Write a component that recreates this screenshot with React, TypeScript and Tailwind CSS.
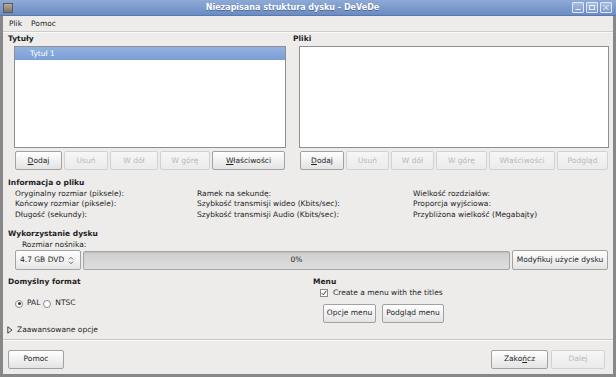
const btnBase =
  "h-[19px] shrink-0 flex items-center justify-center rounded-[2px] border bg-linear-to-b";
const btnOn = "border-[#a2a2a2] from-white to-[#e3e3e3] text-[#1e1e1e]";
const btnOff = "border-[#d2d2d2] from-[#f6f6f6] to-[#ebebeb] text-[#b9b9b9]";

function Btn({
  w,
  off,
  children,
  className = "",
}: {
  w: string;
  off?: boolean;
  children: React.ReactNode;
  className?: string;
}) {
  return (
    <div className={`${btnBase} ${off ? btnOff : btnOn} ${w} ${className}`}>
      {children}
    </div>
  );
}

function U({ children }: { children: React.ReactNode }) {
  return <span className="underline underline-offset-[1px]">{children}</span>;
}

function TitleBar() {
  return (
    <div className="relative h-[16px] shrink-0 flex items-center bg-linear-to-b from-[#8eaad6] to-[#6b8cc3] border-b border-[#5a78ab]">
      <div className="ml-[3px] w-[10px] h-[10px] bg-linear-to-b from-[#b3aba0] to-[#7c746b] border border-[#5f5a53]" />
      <div className="flex-1 text-center text-white font-bold text-[8px] [text-shadow:0_1px_0_#4a6796]">
        Niezapisana struktura dysku - DeVeDe
      </div>
      <div className="flex gap-[2px] mr-[4px]">
        {["min", "max", "close"].map((k) => (
          <div
            key={k}
            className="w-[12px] h-[11px] rounded-[1px] border border-[#dfe8f6] bg-linear-to-b from-[#a9bfe2] to-[#7d9acb] flex items-center justify-center"
          >
            <svg width="8" height="7" viewBox="0 0 8 7" fill="none" stroke="#eef3fb" strokeWidth="1">
              {k === "min" && <path d="M1.5 5.5h5" />}
              {k === "max" && <rect x="1.5" y="1.5" width="5" height="4" />}
              {k === "close" && <path d="M1.5 1l5 5M6.5 1l-5 5" />}
            </svg>
          </div>
        ))}
      </div>
    </div>
  );
}

function ListBox({ w, children }: { w: string; children?: React.ReactNode }) {
  return (
    <div className={`${w} h-[102px] bg-white border border-[#8f8f8f]`}>{children}</div>
  );
}

const INFO = [
  ["Oryginalny rozmiar (piksele):", "Ramek na sekundę:", "Wielkość rozdziałów:"],
  ["Końcowy rozmiar (piksele):", "Szybkość transmisji wideo (Kbits/sec):", "Proporcja wyjściowa:"],
  ["Długość (sekundy):", "Szybkość transmisji Audio (Kbits/sec):", "Przybliżona wielkość (Megabajty)"],
];

export default function App() {
  return (
    <div className="w-[616px] h-[377px] bg-[#878787] flex flex-col overflow-hidden font-['DejaVu_Sans',sans-serif] text-[7.5px] text-[#1e1e1e]">
      <TitleBar />
      <div className="flex-1 mx-[3px] mb-[3px] bg-[#edeceb] flex flex-col">
        {/* menubar */}
        <div className="h-[16px] shrink-0 flex items-center gap-[9px] pl-[6px] border-b border-[#cfcdca] shadow-[0_1px_0_#fafafa] text-[7.5px]">
          <span>Plik</span>
          <span>Pomoc</span>
        </div>

        {/* titles / files */}
        <div className="flex pl-[5px]">
          <div className="w-[278px] flex flex-col">
            <div className="h-[14px] leading-[14px] font-bold">Tytuły</div>
            <div className="pl-[6px]">
              <ListBox w="w-[272px]">
                <div className="h-[13px] leading-[13px] pl-[15px] text-white bg-linear-to-b from-[#92b2e0] to-[#7b9fd6]">
                  Tytuł 1
                </div>
              </ListBox>
              <div className="flex gap-[2px] mt-[3px] pl-[1px]">
                <Btn w="w-[47px]"><U>D</U>odaj</Btn>
                <Btn w="w-[44px]" off>Usuń</Btn>
                <Btn w="w-[48px]" off>W dół</Btn>
                <Btn w="w-[50px]" off>W górę</Btn>
                <Btn w="w-[73px]"><U>W</U>łaściwości</Btn>
              </div>
            </div>
          </div>
          <div className="ml-[7px] w-[316px] flex flex-col">
            <div className="h-[14px] leading-[14px] font-bold">Pliki</div>
            <div className="pl-[6px]">
              <ListBox w="w-[310px]" />
              <div className="flex gap-[2px] mt-[3px] pl-[1px]">
                <Btn w="w-[44px]"><U>D</U>odaj</Btn>
                <Btn w="w-[43px]" off>Usuń</Btn>
                <Btn w="w-[43px]" off>W dół</Btn>
                <Btn w="w-[51px]" off>W górę</Btn>
                <Btn w="w-[66px]" off>Właściwości</Btn>
                <Btn w="w-[51px]" off>Podgląd</Btn>
              </div>
            </div>
          </div>
        </div>

        {/* file info */}
        <div className="mt-[8px] pl-[5px] leading-[10.5px]">
          <div className="font-bold">Informacja o pliku</div>
          {INFO.map((r) => (
            <div key={r[0]} className="grid grid-cols-[182px_216px_1fr] pl-[7px]">
              <span>{r[0]}</span>
              <span>{r[1]}</span>
              <span>{r[2]}</span>
            </div>
          ))}
        </div>

        {/* disk usage */}
        <div className="mt-[9px] pl-[5px] leading-[10.5px]">
          <div className="font-bold">Wykorzystanie dysku</div>
          <div className="pl-[14px]">Rozmiar nośnika:</div>
        </div>
        <div className="flex items-center pl-[12px] pr-[5px] h-[20px]">
          <div className="w-[66px] h-[20px] flex items-center justify-between pl-[4px] pr-[6px] rounded-[2px] border border-[#a2a2a2] bg-linear-to-b from-white to-[#e6e6e6] whitespace-nowrap">
            <span>4.7 GB DVD</span>
            <svg width="6" height="9" viewBox="0 0 6 9" fill="none" stroke="#555" strokeWidth="0.9" className="shrink-0">
              <path d="M1 3.3L3 1.3 5 3.3M1 5.7L3 7.7 5 5.7" />
            </svg>
          </div>
          <div className="ml-[2px] w-[427px] h-[19px] flex items-center justify-center rounded-[2px] border border-[#a6a6a6] bg-linear-to-b from-[#cfcfcf] to-[#dedede] shadow-[inset_0_1px_1px_#bdbdbd]">
            0%
          </div>
          <Btn w="w-[96px]" className="ml-[2px] h-[20px]">Modyfikuj użycie dysku</Btn>
        </div>

        {/* format / menu */}
        <div className="flex mt-[7px] pl-[5px] leading-[10.5px]">
          <div className="w-[305px] flex flex-col">
            <div className="font-bold">Domyślny format</div>
            <div className="flex items-center h-[14px] mt-[9px] pl-[7px]">
              <span className="w-[8px] h-[8px] rounded-full border border-[#8a8a8a] bg-white flex items-center justify-center">
                <span className="w-[3px] h-[3px] rounded-full bg-[#333]" />
              </span>
              <span className="ml-[4px]">PAL</span>
              <span className="ml-[3px] w-[8px] h-[8px] rounded-full border border-[#8a8a8a] bg-white" />
              <span className="ml-[4px]">NTSC</span>
            </div>
          </div>
          <div className="flex flex-col">
            <div className="font-bold">Menu</div>
            <div className="flex items-center h-[11px] pl-[7px]">
              <span className="w-[8px] h-[8px] border border-[#8a8a8a] bg-white flex items-center justify-center">
                <svg width="6" height="6" viewBox="0 0 6 6" fill="none" stroke="#333" strokeWidth="1">
                  <path d="M0.8 3.2L2.3 4.8 5.3 0.8" />
                </svg>
              </span>
              <span className="ml-[5px]">Create a menu with the titles</span>
            </div>
            <div className="flex gap-[6px] mt-[5px] pl-[10px]">
              <Btn w="w-[53px]" className="h-[17px]">Opcje menu</Btn>
              <Btn w="w-[62px]" className="h-[17px]">Podgląd menu</Btn>
            </div>
          </div>
        </div>

        {/* advanced */}
        <div className="flex items-center h-[10px] mt-[2px] pl-[4px]">
          <svg width="6" height="8" viewBox="0 0 6 8" fill="none" stroke="#333" strokeWidth="0.9">
            <path d="M0.8 0.8L5 4 0.8 7.2Z" />
          </svg>
          <span className="ml-[4px]">Zaawansowane opcje</span>
        </div>

        <div className="mt-[4px] h-[2px] border-t border-[#c9c7c4] bg-[#fbfbfa]" />

        {/* dialog buttons */}
        <div className="flex items-center mt-[9px] pl-[5px] pr-[8px]">
          <Btn w="w-[56px]">Pomoc</Btn>
          <div className="flex-1" />
          <Btn w="w-[57px]">Zako<U>ń</U>cz</Btn>
          <Btn w="w-[54px]" off className="ml-[3px]">Dalej</Btn>
        </div>
      </div>
    </div>
  );
}
